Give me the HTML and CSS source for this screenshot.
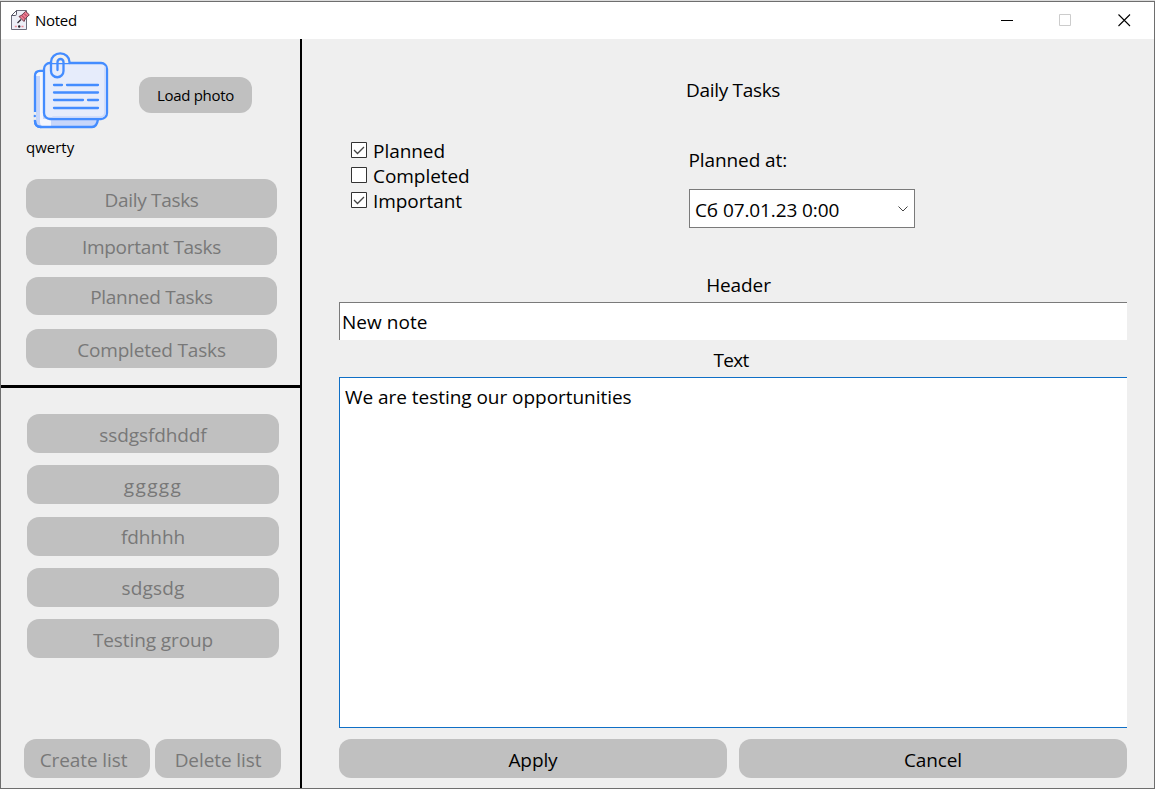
FILE: index.html
```html
<!DOCTYPE html>
<html lang="en">
<head>
<meta charset="utf-8">
<title>Noted</title>
<link rel="stylesheet" href="styles.css">
</head>
<body>
<div class="window">
  <header class="titlebar">
    <svg class="app-icon" width="20" height="22" viewBox="0 0 20 22" fill="none">
      <path d="M6.500 1.500H16.500V20.500H1.500V6.500Z" fill="#eeeff8" stroke="#6d6d7c"/>
      <path d="M1.500 6.500L6.500 1.500V5.200Q6.500 6.500 5.200 6.500Z" fill="#fff" stroke="#59596a"/>
      <path d="M7.500 14L11 10.500" stroke="#2c2732" stroke-width="1.300"/>
      <path d="M9 7.500L14 12.500L15.300 9.800L19.300 5.800L15.600 2.300L11.600 6.300Z" fill="#ee7a90" stroke="#5a3040" stroke-width=".9"/>
      <path d="M11.600 6.300L15.300 9.800M14 4.500L17 7.500" stroke="#8d3049" stroke-width=".8"/>
      <path d="M4.800 17.500h2M11.500 17.500h2" stroke="#ee8a98" stroke-width="1.500"/>
      <circle cx="9.200" cy="17.500" r="1.200" fill="#201d28"/>
    </svg>
    <span class="app-name">Noted</span>
    <div class="controls">
      <svg width="13" height="13" viewBox="0 0 13 13"><path d="M1 6.500H13" stroke="#000"/></svg>
      <svg width="13" height="13" viewBox="0 0 13 13"><path d="M.5 .5H11.500V11.500H.5Z" fill="none" stroke="#ccc"/></svg>
      <svg width="13" height="13" viewBox="0 0 13 13"><path d="M.5 .5L12 12M12 .5L.5 12" stroke="#000" stroke-width="1.100"/></svg>
    </div>
  </header>
  <div class="content">
    <aside class="sidebar">
      <section class="profile">
        <div class="photo-row">
          <svg class="photo" width="76" height="78" viewBox="0 0 76 78" fill="none" stroke="#438cff" stroke-width="2.300" stroke-linecap="round">
            <path d="M10 19H7Q2 19 2 24V69Q2 75 8 75H59Q64 75 65 67" fill="#c7d6fa"/>
            <path d="M3.200 24Q3.200 20 8 20H10V67H18V73.500H9Q7 73.500 7 69V24Z" fill="#f4f6fd" stroke="none"/>
            <path d="M1.800 60V68" stroke="#efefef" stroke-width="3" stroke-linecap="butt"/>
            <path d="M1.800 64V64.200M2 69Q2 75 8 75"/>
            <rect x="11" y="11" width="63" height="56" rx="6" fill="#e6ecfb"/>
            <path d="M72 15V60Q72 65 67 65H20" stroke="#cbd9fb" stroke-width="1.500"/>
            <path d="M18 11V10A9.200 8.500 0 0 1 36.500 10V11" fill="#efefef"/>
            <path d="M18 10V19A6.200 6.200 0 0 0 30.500 19V10A3 3 0 0 0 24.500 10V18"/>
            <path d="M21 33H29M34 33H65M21 40.500H65M21 48H50M55 48H65M21 56H65"/>
          </svg>
          <button class="btn load">Load photo</button>
        </div>
        <div class="user">qwerty</div>
        <nav class="filters">
          <button class="btn muted">Daily Tasks</button>
          <button class="btn muted">Important Tasks</button>
          <button class="btn muted">Planned Tasks</button>
          <button class="btn muted">Completed Tasks</button>
        </nav>
      </section>
      <section class="lists">
        <nav class="groups">
          <button class="btn muted">ssdgsfdhddf</button>
          <button class="btn muted wide">ggggg</button>
          <button class="btn muted">fdhhhh</button>
          <button class="btn muted">sdgsdg</button>
          <button class="btn muted">Testing group</button>
        </nav>
        <div class="list-actions">
          <button class="btn muted create">Create list</button>
          <button class="btn muted">Delete list</button>
        </div>
      </section>
    </aside>
    <main class="editor">
      <h1 class="title">Daily Tasks</h1>
      <div class="options">
        <div class="checks">
          <div class="check"><svg width="16" height="16" viewBox="0 0 16 16"><path d="M.5 .5H15.500V15.500H.5Z" fill="#fff" stroke="#333"/><path d="M3 8L6.500 11.500L13 5" fill="none" stroke="#444" stroke-width="1.300"/></svg><span>Planned</span></div>
          <div class="check"><svg width="16" height="16" viewBox="0 0 16 16"><path d="M.5 .5H15.500V15.500H.5Z" fill="#fff" stroke="#333"/></svg><span>Completed</span></div>
          <div class="check"><svg width="16" height="16" viewBox="0 0 16 16"><path d="M.5 .5H15.500V15.500H.5Z" fill="#fff" stroke="#333"/><path d="M3 8L6.500 11.500L13 5" fill="none" stroke="#444" stroke-width="1.300"/></svg><span>Important</span></div>
        </div>
        <div class="planned">
          <div class="planned-label">Planned at:</div>
          <div class="picker"><span>Сб 07.01.23 0:00</span><svg width="10" height="6" viewBox="0 0 10 6"><path d="M.5 .5L5 5L9.500 .5" fill="none" stroke="#444"/></svg></div>
        </div>
      </div>
      <div class="label header-label">Header</div>
      <div class="field">New note</div>
      <div class="label text-label">Text</div>
      <div class="field area">We are testing our opportunities</div>
      <div class="actions">
        <button class="btn">Apply</button>
        <button class="btn">Cancel</button>
      </div>
    </main>
  </div>
</div>
</body>
</html>
```

FILE: styles.css
```css
* { box-sizing: border-box; }
body { margin: 0; background: #dcdcdc; padding-top: 1px; font-family: "Open Sans", "Noto Sans", sans-serif; font-size: 19px; letter-spacing: -0.1px; color: #000; }
.window { height: 788px; width: 1155px; border: 1px solid #6e6e6e; background: #efefef; display: flex; flex-direction: column; overflow: hidden; }
.titlebar { height: 37px; background: #fff; display: flex; align-items: center; padding: 0 23px 0 9px; flex: none; }
.app-icon { margin-top: -2px; }
.app-name { font-size: 15px; margin: -2px 0 0 5px; letter-spacing: -0.3px; }
.controls { margin-left: auto; display: flex; gap: 46px; }
.content { flex: 1; display: flex; min-height: 0; }
.sidebar { width: 301px; border-right: 2px solid #000; flex: none; display: flex; flex-direction: column; }
.profile { height: 349px; border-bottom: 3px solid #000; padding: 12px 0 0 25px; }
.photo-row { display: flex; align-items: center; height: 88px; padding-left: 7px; }
.photo { margin-top: -9px; flex: none; }
.btn { border: 0; border-radius: 12px; background: #c0c0c0; height: 38px; padding: 3px 0 0; font: inherit; letter-spacing: inherit; color: #000; line-height: 34px; text-align: center; }
.muted { color: #787878; }
.load { width: 113px; height: 36px; margin-left: 30px; padding: 0 0 1px; font-size: 15px; letter-spacing: -0.3px; }
.user { font-size: 15px; line-height: 20px; height: 40px; margin-top: -2px; margin-bottom: 2px; letter-spacing: 0; }
.filters { display: grid; width: 251px; grid-template-rows: 38px 38px 38px 38px; row-gap: 12px; letter-spacing: -0.3px; }
.filters .btn:nth-child(1) { margin-bottom: -1px; height: 39px; }
.filters .btn:nth-child(2) { margin-top: -2px; padding-top: 1px; }
.filters .btn:nth-child(3) { margin-top: -2px; padding-top: 1px; }
.filters .btn:nth-child(4) { height: 39px; letter-spacing: -0.17px; }
.lists { flex: 1; display: flex; flex-direction: column; justify-content: space-between; padding: 26px 20px 10px 23px; }
.groups { display: grid; gap: 12.300px; width: 252px; margin-left: 3px; }
.groups .btn { height: 39px; }
.groups .btn:nth-child(3), .groups .btn:nth-child(4) { padding-top: 1px; }
.groups .btn:nth-child(4) { letter-spacing: 0.2px; }
.groups .wide { letter-spacing: 1.4px; }
.list-actions { display: flex; gap: 5px; }
.list-actions .btn { width: 126px; height: 39px; flex: none; }
.list-actions .create { padding-right: 7px; }
.editor { flex: 1; padding: 0 27px 10px 37px; display: flex; flex-direction: column; min-width: 0; }
.title { margin: 37px 0 0; font: inherit; text-align: center; line-height: 28px; height: 70px; letter-spacing: -0.3px; }
.options { display: flex; height: 125px; }
.checks { width: 350px; padding: 0 0 0 12px; margin-top: -7px; }
.check { display: flex; height: 25px; line-height: 25px; letter-spacing: -0.05px; }
.check svg { margin-top: 3px; margin-right: 6px; flex: none; }
.check span { height: 25px; }
.planned-label { line-height: 28px; height: 43px; margin-left: -0.5px; }
.picker { width: 226px; height: 39px; border: 1px solid #7a7a7a; background: #fff; display: flex; align-items: center; justify-content: space-between; padding: 2px 6px 0 5px; }
.picker svg { margin-top: -2px; }
.label { text-align: center; line-height: 28px; height: 31px; }
.header-label { padding-left: 11px; }
.field { height: 38px; background: #fff; border: 1px solid #7a7a7a; border-right: 0; border-bottom: 0; line-height: 38px; padding-left: 2px; letter-spacing: 0.05px; }
.text-label { height: 37px; line-height: 40px; padding-right: 4px; letter-spacing: -0.7px; }
.area { height: 351px; border-color: #0f6fc6; border-bottom: 1px solid #0f6fc6; padding-left: 5px; letter-spacing: -0.04px; }
.actions { display: flex; gap: 12px; margin-top: 11px; }
.actions .btn { flex: 1; height: 39px; }
```
